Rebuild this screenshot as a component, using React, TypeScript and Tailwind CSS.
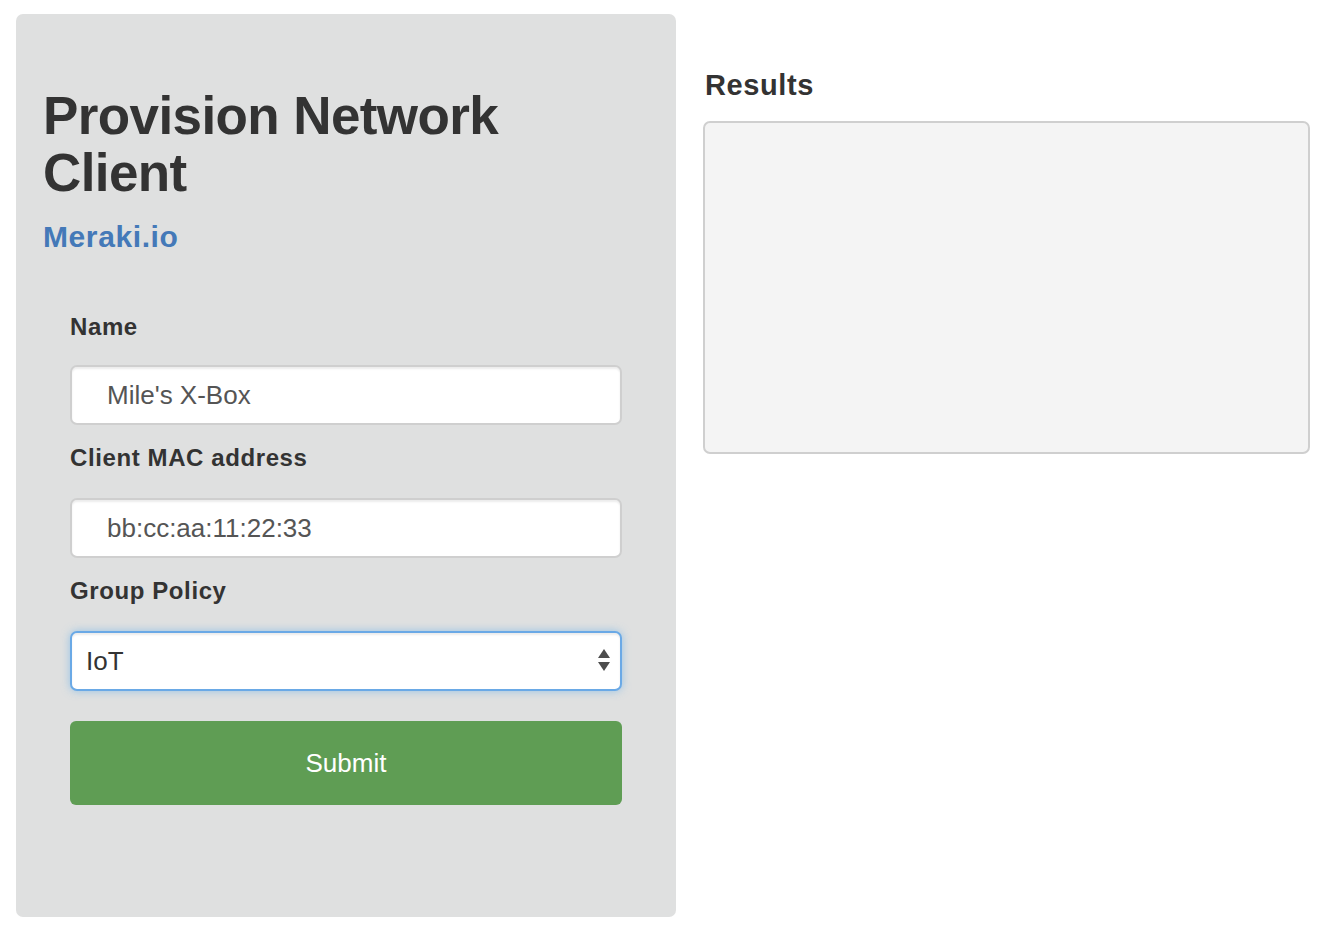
import React from "react";

const font = "font-['Liberation_Sans',Arial,Helvetica,sans-serif]";

function Label({ children }: { children: React.ReactNode }) {
  return (
    <div className="text-[24px] leading-[28px] font-bold text-[#333333] tracking-[0.6px]">
      {children}
    </div>
  );
}

function TextInput({ value }: { value: string }) {
  return (
    <div className="h-[60px] w-full rounded-[7px] border-2 border-[#cfcfcf] bg-white shadow-[inset_0_2px_2px_rgba(0,0,0,0.075)] flex items-center pl-[35px] text-[26px] text-[#555555]">
      {value}
    </div>
  );
}

export default function App() {
  return (
    <div className={`${font} min-h-[932px] w-[1332px] bg-white flex items-start pt-[14px] pl-[16px] gap-[27px]`}>
      {/* Left panel */}
      <div className="w-[660px] h-[903px] rounded-[7px] bg-[#dfe0e0] pt-[73px] pl-[27px] pr-[27px]">
        <h2 className="text-[53px] leading-[57px] font-bold text-[#333333] tracking-[-0.6px]">
          Provision Network
          <br />
          Client
        </h2>
        <div className="mt-[18px] text-[30px] leading-[36px] font-bold text-[#4479b8] tracking-[0.6px]">
          Meraki.io
        </div>

        <div className="mt-[58px] ml-[27px] w-[552px] flex flex-col">
          <Label>Name</Label>
          <div className="mt-[24px]">
            <TextInput value="Mile's X-Box" />
          </div>

          <div className="mt-[19px]">
            <Label>Client MAC address</Label>
          </div>
          <div className="mt-[26px]">
            <TextInput value="bb:cc:aa:11:22:33" />
          </div>

          <div className="mt-[19px]">
            <Label>Group Policy</Label>
          </div>
          <div className="mt-[26px]">
            <div className="relative h-[60px] w-full rounded-[7px] border-2 border-[#6aa9e6] bg-white shadow-[0_0_9px_rgba(102,175,233,0.6),inset_0_2px_2px_rgba(0,0,0,0.075)] flex items-center pl-[14px] text-[26px] text-[#333333]">
              IoT
              <svg
                className="absolute right-[9px] top-1/2 -translate-y-1/2"
                width="14"
                height="26"
                viewBox="0 0 14 26"
              >
                <polygon points="7,1 13,10 1,10" fill="#4d4d4d" />
                <polygon points="1,14 13,14 7,23" fill="#4d4d4d" />
              </svg>
            </div>
          </div>

          <div className="mt-[30px]">
            <div className="h-[84px] w-full rounded-[6px] bg-[#5f9d54] flex items-center justify-center text-white text-[26px]">
              Submit
            </div>
          </div>
        </div>
      </div>

      {/* Right column */}
      <div className="w-[607px] pt-[54px]">
        <div className="text-[29px] leading-[34px] font-bold text-[#333333] tracking-[0.6px] pl-[2px]">
          Results
        </div>
        <div className="mt-[19px] h-[333px] w-full rounded-[7px] border-2 border-[#cfcfcf] bg-[#f4f4f4]" />
      </div>
    </div>
  );
}
